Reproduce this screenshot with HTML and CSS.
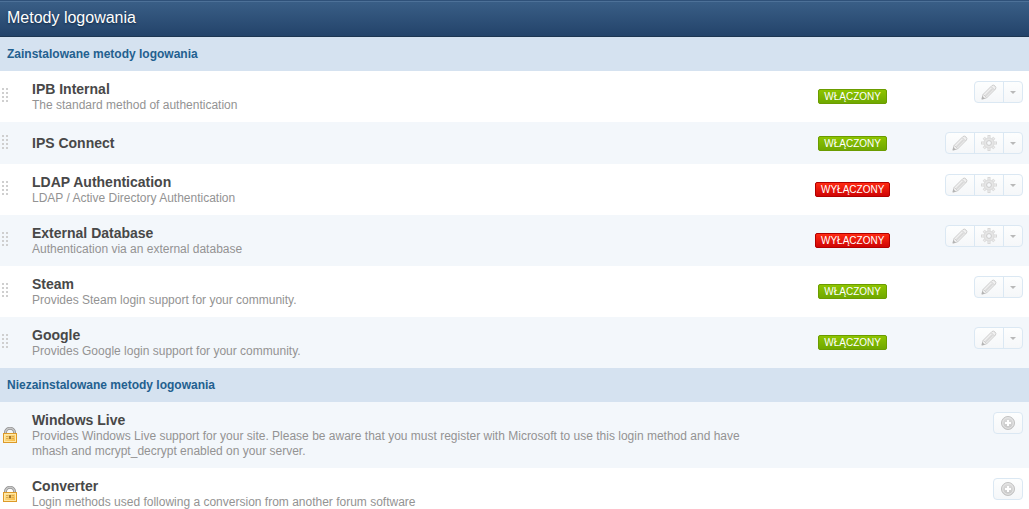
FILE: index.html
```html
<!DOCTYPE html>
<html lang="pl">
<head>
<meta charset="utf-8">
<title>Metody logowania</title>
<link rel="stylesheet" href="styles.css">
</head>
<body>
<svg class="sprite" aria-hidden="true">
  <defs>
    <linearGradient id="gold" x1="0" y1="0" x2="1" y2="1">
      <stop offset="0" stop-color="#fdf0b8"/><stop offset="1" stop-color="#f7b02c"/>
    </linearGradient>
    <linearGradient id="silver" x1="0" y1="0" x2="0" y2="1">
      <stop offset="0" stop-color="#dedede"/><stop offset="1" stop-color="#c6c6c6"/>
    </linearGradient>
    <symbol id="grip" viewBox="0 0 6 14">
      <path fill="#cfcfcf" d="M0 0h2v2H0zM4 0h2v2H4zM0 4h2v2H0zM4 4h2v2H4zM0 8h2v2H0zM4 8h2v2H4zM0 12h2v2H0zM4 12h2v2H4z"/>
    </symbol>
    <symbol id="pencil" viewBox="0 0 16 16">
      <path d="M1 15l1-4.500 9-9q1.500-1 3 .5t.5 3L5.500 14z" fill="#f0f0f0" stroke="#cdcdcd"/>
      <path d="M4.500 12l7-7" stroke="#dadada" stroke-width="2"/>
      <path d="M10.500 3l3 3M2.500 10.500l3 3" stroke="#cfcfcf"/>
      <path d="M.5 15.500l.8-3.500 2.700 2.700z" fill="#b4b4b4"/>
    </symbol>
    <symbol id="gear" viewBox="0 0 16 16">
      <g stroke="#d8d8d8" stroke-width="3">
        <path d="M8 0v16M0 8h16M2.700 2.700l10.600 10.600M13.300 2.700L2.700 13.300"/>
      </g>
      <g stroke="#ebebeb" stroke-width="1.400">
        <path d="M8 1v14M1 8h14M3 3l10 10M13 3L3 13"/>
      </g>
      <circle cx="8" cy="8" r="5" fill="#e6e6e6" stroke="#dcdcdc"/>
      <circle cx="8" cy="8" r="2.400" fill="#f6f8fa" stroke="#cccccc"/>
    </symbol>
    <symbol id="arrow" viewBox="0 0 6 3"><path d="M0 0h6L3 3z" fill="#b9b9b9"/></symbol>
    <symbol id="plus" viewBox="0 0 14 14">
      <circle cx="7" cy="7" r="6.500" fill="url(#silver)" stroke="#c2c2c2"/>
      <circle cx="7" cy="7" r="5.300" fill="none" stroke="#e6e6e6"/>
      <path d="M7 4v6M4 7h6" stroke="#ffffff" stroke-width="2"/>
    </symbol>
    <symbol id="lock" viewBox="0 0 14 16">
      <path d="M2.500 8V5.500a4.500 4.200 0 0 1 9 0V8" fill="none" stroke="#8f8f8f" stroke-width="3"/>
      <path d="M2.500 8V5.500a4.500 4.200 0 0 1 9 0V8" fill="none" stroke="#c8c8c8" stroke-width="1.400"/>
      <rect x=".5" y="6.500" width="13" height="9" fill="url(#gold)" stroke="#dd9a28"/>
      <rect x="1.500" y="7.500" width="11" height="7" fill="none" stroke="#ffe9a8"/>
      <path d="M3 9.500h2.500M3 11.500h2.500M8.500 9.500H11M8.500 11.500H11" stroke="#e0aa48"/>
      <path d="M6 9h2v3H6z" fill="#a07830"/>
    </symbol>
  </defs>
</svg>
<main>
  <h1 class="title">Metody logowania</h1>
  <table class="methods">
    <colgroup><col class="col-icon"><col class="col-text"><col class="col-status"><col class="col-tools"></colgroup>
    <tbody>
      <tr><th class="section" colspan="4" scope="rowgroup">Zainstalowane metody logowania</th></tr>
      <tr class="row">
        <td class="mark"><svg class="grip"><use href="#grip"/></svg></td>
        <td class="method"><strong class="name">IPB Internal</strong><span class="desc">The standard method of authentication</span></td>
        <td class="status"><span class="badge on">WŁĄCZONY</span></td>
        <td class="tools"><div class="group"><button class="tool" aria-label="Edytuj"><svg class="icon"><use href="#pencil"/></svg></button><button class="tool more" aria-label="Więcej"><svg class="arrow"><use href="#arrow"/></svg></button></div></td>
      </tr>
      <tr class="row alt">
        <td class="mark"><svg class="grip"><use href="#grip"/></svg></td>
        <td class="method"><strong class="name">IPS Connect</strong></td>
        <td class="status"><span class="badge on">WŁĄCZONY</span></td>
        <td class="tools"><div class="group"><button class="tool" aria-label="Edytuj"><svg class="icon"><use href="#pencil"/></svg></button><button class="tool" aria-label="Ustawienia"><svg class="icon"><use href="#gear"/></svg></button><button class="tool more" aria-label="Więcej"><svg class="arrow"><use href="#arrow"/></svg></button></div></td>
      </tr>
      <tr class="row">
        <td class="mark"><svg class="grip"><use href="#grip"/></svg></td>
        <td class="method"><strong class="name">LDAP Authentication</strong><span class="desc">LDAP / Active Directory Authentication</span></td>
        <td class="status"><span class="badge off">WYŁĄCZONY</span></td>
        <td class="tools"><div class="group"><button class="tool" aria-label="Edytuj"><svg class="icon"><use href="#pencil"/></svg></button><button class="tool" aria-label="Ustawienia"><svg class="icon"><use href="#gear"/></svg></button><button class="tool more" aria-label="Więcej"><svg class="arrow"><use href="#arrow"/></svg></button></div></td>
      </tr>
      <tr class="row alt">
        <td class="mark"><svg class="grip"><use href="#grip"/></svg></td>
        <td class="method"><strong class="name">External Database</strong><span class="desc">Authentication via an external database</span></td>
        <td class="status"><span class="badge off">WYŁĄCZONY</span></td>
        <td class="tools"><div class="group"><button class="tool" aria-label="Edytuj"><svg class="icon"><use href="#pencil"/></svg></button><button class="tool" aria-label="Ustawienia"><svg class="icon"><use href="#gear"/></svg></button><button class="tool more" aria-label="Więcej"><svg class="arrow"><use href="#arrow"/></svg></button></div></td>
      </tr>
      <tr class="row">
        <td class="mark"><svg class="grip"><use href="#grip"/></svg></td>
        <td class="method"><strong class="name">Steam</strong><span class="desc">Provides Steam login support for your community.</span></td>
        <td class="status"><span class="badge on">WŁĄCZONY</span></td>
        <td class="tools"><div class="group"><button class="tool" aria-label="Edytuj"><svg class="icon"><use href="#pencil"/></svg></button><button class="tool more" aria-label="Więcej"><svg class="arrow"><use href="#arrow"/></svg></button></div></td>
      </tr>
      <tr class="row alt">
        <td class="mark"><svg class="grip"><use href="#grip"/></svg></td>
        <td class="method"><strong class="name">Google</strong><span class="desc">Provides Google login support for your community.</span></td>
        <td class="status"><span class="badge on">WŁĄCZONY</span></td>
        <td class="tools"><div class="group"><button class="tool" aria-label="Edytuj"><svg class="icon"><use href="#pencil"/></svg></button><button class="tool more" aria-label="Więcej"><svg class="arrow"><use href="#arrow"/></svg></button></div></td>
      </tr>
    </tbody>
    <tbody>
      <tr><th class="section" colspan="4" scope="rowgroup">Niezainstalowane metody logowania</th></tr>
      <tr class="row alt">
        <td class="mark"><svg class="lock"><use href="#lock"/></svg></td>
        <td class="method"><strong class="name">Windows Live</strong><span class="desc">Provides Windows Live support for your site. Please be aware that you must register with Microsoft to use this login method and have mhash and mcrypt_decrypt enabled on your server.</span></td>
        <td class="status"></td>
        <td class="tools"><div class="group"><button class="tool" aria-label="Zainstaluj"><svg class="plus"><use href="#plus"/></svg></button></div></td>
      </tr>
      <tr class="row">
        <td class="mark"><svg class="lock"><use href="#lock"/></svg></td>
        <td class="method"><strong class="name">Converter</strong><span class="desc">Login methods used following a conversion from another forum software</span></td>
        <td class="status"></td>
        <td class="tools"><div class="group"><button class="tool" aria-label="Zainstaluj"><svg class="plus"><use href="#plus"/></svg></button></div></td>
      </tr>
    </tbody>
  </table>
</main>
</body>
</html>
```
FILE: styles.css
```css
* {
  box-sizing: border-box;
}

body {
  margin: 0;
  background: #ffffff;
  color: #484848;
  font: 12px/15px "Liberation Sans", Arial, sans-serif;
}

svg {
  display: block;
}

.sprite {
  position: absolute;
  width: 0;
  height: 0;
}

.title {
  margin: 0;
  padding: 7px 7px 8px;
  border-top: 1px solid #2f5179;
  border-bottom: 1px solid #1d3652;
  box-shadow: inset 0 1px 0 #4d7198;
  background: linear-gradient(#3a5f87, #23436a);
  color: #ffffff;
  font-size: 16px;
  font-weight: normal;
  line-height: 20px;
  text-shadow: 0 1px 2px #122a45;
}

.methods {
  width: 100%;
  table-layout: fixed;
  border-collapse: collapse;
}

.col-icon { width: 32px; }
.col-status { width: 16%; }
.col-tools { width: 94px; }

.section {
  height: 34px;
  padding: 0 7px;
  background: #d5e2f0;
  color: #23608f;
  text-align: left;
}

.row td {
  padding: 10px 0;
  vertical-align: middle;
}

.row .method {
  padding-bottom: 9px;
}

.alt {
  background: #f3f7fb;
}

.row .mark {
  padding-left: 2px;
}

.grip {
  width: 6px;
  height: 14px;
  margin-bottom: 3px;
}

.lock {
  width: 16px;
  height: 16px;
}

.name {
  display: block;
  font-size: 14px;
  line-height: 17px;
}

.desc {
  display: block;
  max-width: 730px;
  color: #939393;
}

.status {
  text-align: center;
}

.badge {
  display: inline-block;
  padding: 0 5px;
  border: 1px solid;
  border-radius: 2px;
  color: #ffffff;
  font-size: 10px;
  line-height: 13px;
  vertical-align: middle;
}

.on {
  border-color: #6b9c00;
  background: linear-gradient(#8dc400, #6fa800);
}

.off {
  border-color: #b00000;
  background: linear-gradient(#ff2a12, #cf0505);
}

.row .tools {
  padding-right: 6px;
  vertical-align: top;
}

.group {
  display: flex;
  width: max-content;
  margin-left: auto;
  border: 1px solid #dbe8f3;
  border-radius: 4px;
  background: linear-gradient(#fdfefe, #f5f7f9);
}

.tool {
  display: flex;
  align-items: center;
  justify-content: center;
  width: 28px;
  height: 20px;
  padding: 0;
  border: 0;
  background: none;
}

.tool + .tool {
  width: 29px;
  border-left: 1px solid #dbe8f3;
}

.tool + .more {
  width: 19px;
}

.icon {
  width: 16px;
  height: 16px;
}

.arrow {
  width: 6px;
  height: 3px;
}

.plus {
  width: 14px;
  height: 14px;
}
```
